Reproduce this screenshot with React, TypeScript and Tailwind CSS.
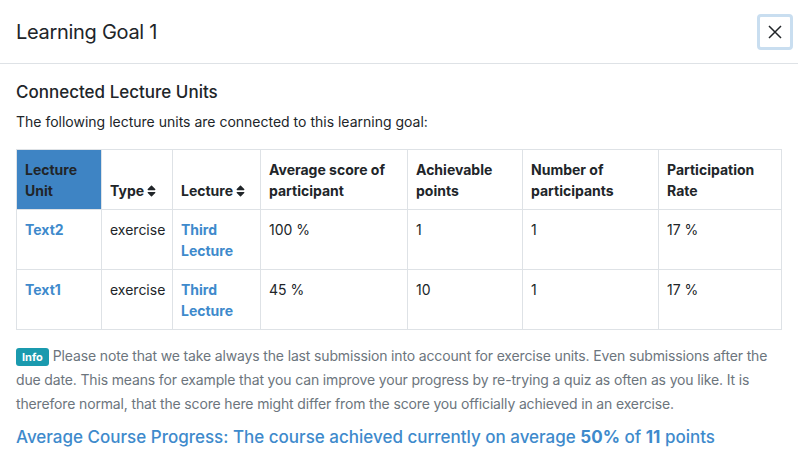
import React from "react";

const Sort = () => (
  <svg width="9" height="14" viewBox="0 0 320 512" className="inline-block ml-[3px] -mt-[2px] align-middle" fill="#212529">
    <path d="M41 288h238c21.4 0 32.1 25.9 17 41L177 448c-9.4 9.4-24.6 9.4-33.9 0L24 329c-15.1-15.1-4.4-41 17-41zm255-105L177 64c-9.4-9.4-24.6-9.4-33.9 0L24 183c-15.1 15.1-4.4 41 17 41h238c21.4 0 32.1-25.9 17-41z" />
  </svg>
);

export default function App() {
  const th = "border border-[#dee2e6] px-[8px] pt-[9px] pb-[8px] text-left font-bold";
  const td = "border border-[#dee2e6] px-[8px] pt-[9px] pb-[8px] align-top";
  const link = "text-[#3e8acc] font-bold";
  const rows = [
    { u: "Text2", avg: "100 %", pts: "1" },
    { u: "Text1", avg: "45 %", pts: "10" },
  ];
  return (
    <div className="w-[798px] h-[473px] bg-white text-[#212529] overflow-hidden" style={{ fontFamily: "Inter, 'Noto Sans', sans-serif" }}>
      <div className="h-full flex flex-col">
        <div className="flex items-center justify-between pl-[16px] pr-[5px] h-[64px] border-b border-[#dee2e6]">
          <div className="text-[20px] leading-[30px] tracking-[-0.3px]">Learning Goal 1</div>
          <button className="w-[36px] h-[36px] mt-[1px] rounded-[4px] border-[3px] border-[#c9def0] flex items-center justify-center">
            <svg width="16" height="16" viewBox="0 0 16 16" stroke="#212529" strokeWidth="1.5">
              <path d="M2 2L14 14M14 2L2 14" />
            </svg>
          </button>
        </div>
        <div className="px-[16px] pt-[16px]">
          <div className="text-[17px] font-medium leading-[24px]">Connected Lecture Units</div>
          <div className="text-[14px] leading-[21px] mt-[7px]">The following lecture units are connected to this learning goal:</div>
          <table className="mt-[17px] w-[766px] table-fixed border-collapse text-[14px] leading-[21px]">
            <colgroup>
              <col className="w-[85px]" />
              <col className="w-[71px]" />
              <col className="w-[88px]" />
              <col className="w-[147px]" />
              <col className="w-[115px]" />
              <col className="w-[136px]" />
              <col />
            </colgroup>
            <thead>
              <tr className="h-[60px]">
                <th className={th + " align-bottom bg-[#3e84c4]"}>Lecture Unit</th>
                <th className={th + " align-bottom whitespace-nowrap"}>Type<Sort /></th>
                <th className={th + " align-bottom whitespace-nowrap"}>Lecture<Sort /></th>
                <th className={th + " align-top"}>Average score of participant</th>
                <th className={th + " align-top"}>Achievable points</th>
                <th className={th + " align-top"}>Number of participants</th>
                <th className={th + " align-top"}>Participation Rate</th>
              </tr>
            </thead>
            <tbody>
              {rows.map((r) => (
                <tr key={r.u} className="h-[60px]">
                  <td className={td}><span className={link}>{r.u}</span></td>
                  <td className={td}>exercise</td>
                  <td className={td}><span className={link}>Third Lecture</span></td>
                  <td className={td}>{r.avg}</td>
                  <td className={td}>{r.pts}</td>
                  <td className={td}>1</td>
                  <td className={td}>17 %</td>
                </tr>
              ))}
            </tbody>
          </table>
          <div className="mt-[14px] text-[14px] leading-[24px] text-[#6c757d] tracking-[-0.15px]">
            <span className="inline-block bg-[#1a9aae] text-white text-[11px] font-bold leading-[18px] px-[6px] rounded-[3px] mr-[4px] tracking-normal">Info</span>
            <span>Please note that we take always the last submission into account for exercise units. Even submissions after the due date. This means for example that you can improve your progress by re-trying a quiz as often as you like. It is therefore normal, that the score here might differ from the score you officially achieved in an exercise.</span>
          </div>
          <div className="mt-[9px] text-[17px] leading-[24px] font-medium text-[#3e8acc]">
            Average Course Progress: The course achieved currently on average <b className="font-bold">50%</b> of <b className="font-bold">11</b> points
          </div>
        </div>
      </div>
    </div>
  );
}
